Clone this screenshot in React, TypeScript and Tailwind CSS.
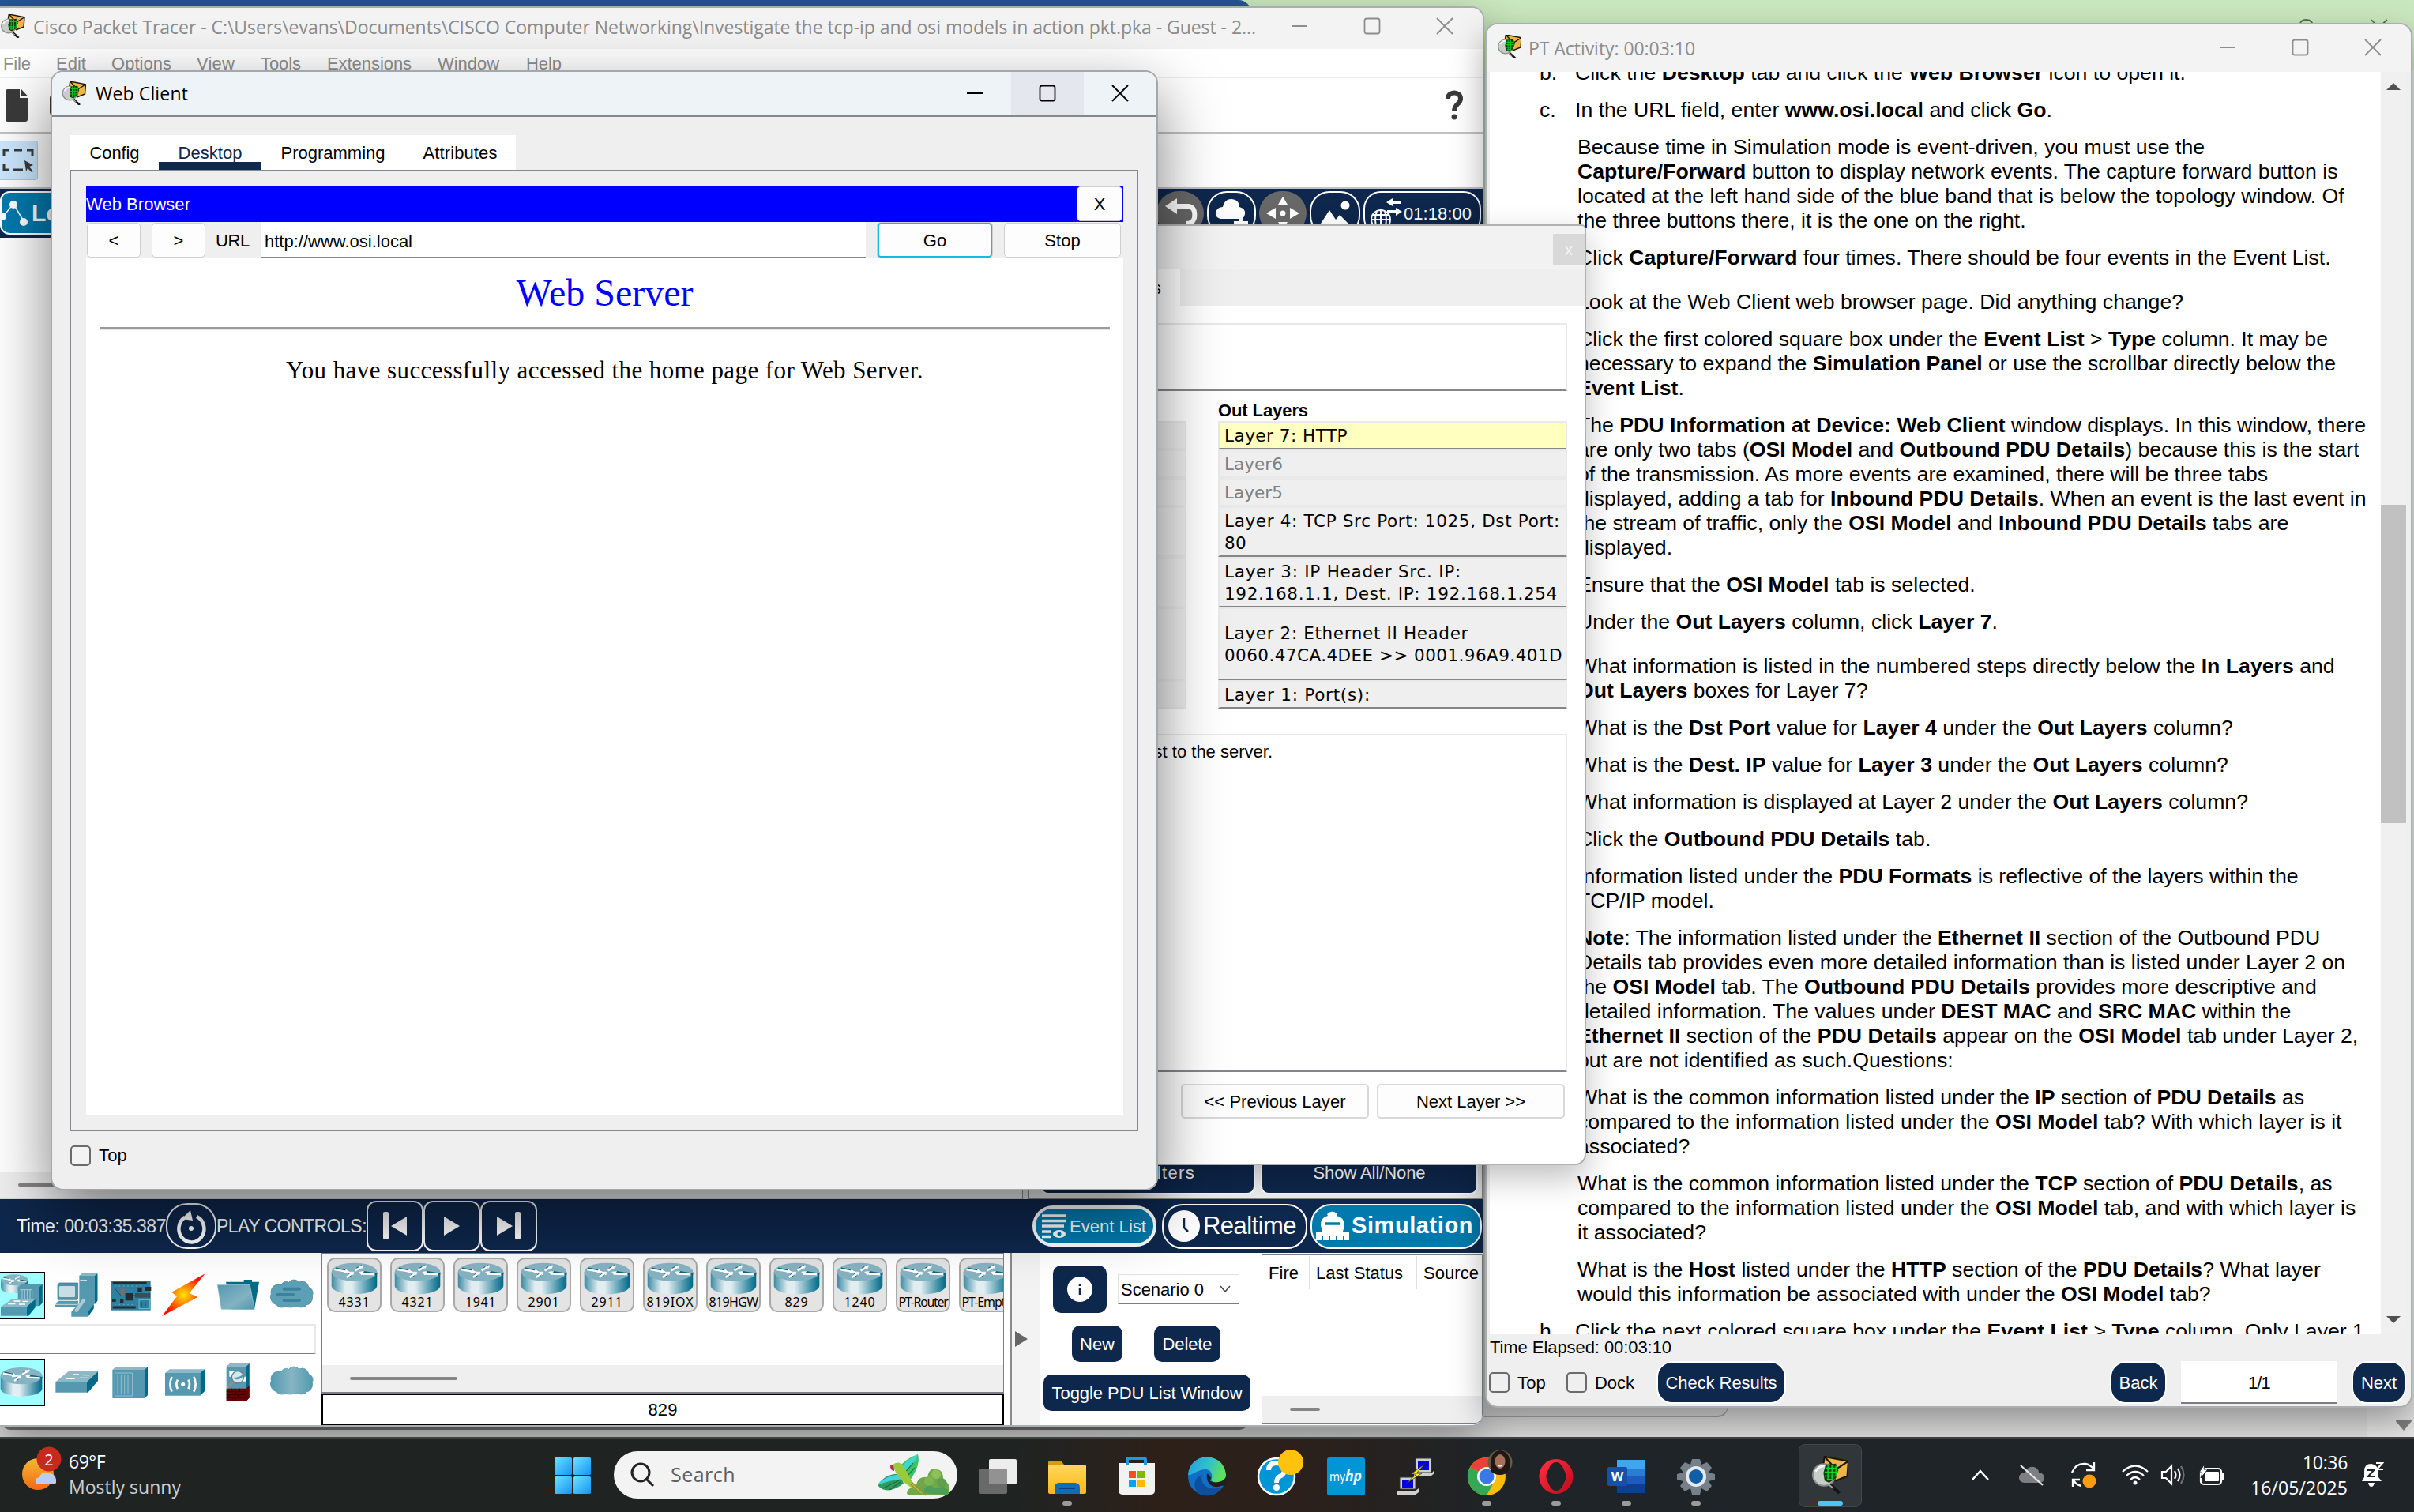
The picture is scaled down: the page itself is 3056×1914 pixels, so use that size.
import React, { useLayoutEffect, useRef, useState } from "react";

/** Single line of text, tracked so that it takes up exactly `w` pixels. */
function Fit({ w, className = "", children }: { w: number; className?: string; children: React.ReactNode }) {
  const ref = useRef<HTMLSpanElement>(null);
  const [spacing, setSpacing] = useState(0);
  useLayoutEffect(() => {
    const el = ref.current;
    if (!el) return;
    el.style.letterSpacing = "0px";
    const natural = el.getBoundingClientRect().width;
    const n = (el.textContent || "").length;
    const s = n ? (w - natural) / n : 0;
    el.style.letterSpacing = s + "px";
    setSpacing(s);
  }, [w]);
  return (
    <span ref={ref} className={"inline-block whitespace-pre " + className} style={{ letterSpacing: spacing }}>
      {children}
    </span>
  );
}

function PTIcon({ className = "" }: { className?: string }) {
  return (
    <svg className={"shrink-0 " + className} viewBox="0 0 32 32">
      <path d="M11 0 L32 4 L31 17 L21 21 L9 12Z" fill="#efb54a" stroke="#1d1503" strokeWidth="1.500" />
      <path d="M11 0 L21 11 L32 4" fill="none" stroke="#1d1503" strokeWidth="1.500" />
      <ellipse cx="10.500" cy="16" rx="9.800" ry="9.500" fill="#c9cdc9" stroke="#8b908b" strokeWidth="1.400" />
      <path d="M3 13Q6 8 11 8" stroke="#f4f6f4" strokeWidth="2" fill="none" />
      <path d="M12 7 L21 6 L23 12 L21 19 L15 23 L11 21 L10 14Z" fill="#063d09" />
      <path d="M12 10h10M11 13.500h11M11 17h10M13 20h5M14 7v14M17.500 7v14M21 8v9" stroke="#16d427" strokeWidth="1" />
      <path d="M16 24.500 L24 32" stroke="#141414" strokeWidth="2.800" />
      <path d="M14 24 L19 28" stroke="#a5a5a5" strokeWidth="1.300" />
    </svg>
  );
}

function WinButtons({ color, hover = false }: { color: string; hover?: boolean }) {
  return (
    <div className="flex h-full shrink-0">
      {["min", "max", "close"].map((k) => (
        <div key={k} className={"flex w-[92px] items-center justify-center " + (hover && k === "max" ? "bg-[#e4e8ee]" : "")}>
          <svg width="22" height="22" viewBox="0 0 22 22" fill="none" stroke={color} strokeWidth="1.8">
            {k === "min" && <path d="M1 11H21" />}
            {k === "max" && <rect x="1.5" y="1.5" width="19" height="19" rx="2.5" />}
            {k === "close" && <path d="M1 1L21 21M21 1L1 21" />}
          </svg>
        </div>
      ))}
    </div>
  );
}

function RouterShape() {
  return (
    <g>
      <path d="M2 455 V502 C2 543 160 543 160 502 V455Z" fill="url(#cyl)" />
      <ellipse cx="81" cy="455" rx="79" ry="32" fill="#86b3c2" />
      <g stroke="#1c5f73" strokeWidth="8" fill="none" transform="translate(2 -3)">
        <path d="M14 446 L58 456M158 466 L108 458M66 474 L58 466M88 446 L106 436" />
      </g>
      <g stroke="#fff" strokeWidth="7" fill="#fff">
        <path d="M12 446 L56 454M152 463 L106 461M54 474 L72 460M84 450 L104 438" fill="none" />
        <path d="M52 446 l14 10 l-20 3z M98 455 l16 -2 l-8 12z M66 455 l13 0 l-2 10z M96 434 l16 -2 l-4 10z" strokeWidth="2" />
      </g>
    </g>
  );
}

function Defs() {
  return (
    <svg width="0" height="0" className="absolute">
      <defs>
        <linearGradient id="cyl">
          <stop offset="0" stopColor="#3c8ca5" />
          <stop offset=".3" stopColor="#e2eef1" />
          <stop offset=".45" stopColor="#e2eef1" />
          <stop offset=".8" stopColor="#4c97ad" />
          <stop offset="1" stopColor="#006b88" />
        </linearGradient>
        <linearGradient id="cloudg">
          <stop offset="0" stopColor="#5399b0" />
          <stop offset=".5" stopColor="#86b5c3" />
          <stop offset="1" stopColor="#5399b0" />
        </linearGradient>
        <radialGradient id="boltg">
          <stop offset="0" stopColor="#ffe600" />
          <stop offset=".5" stopColor="#ff7a00" />
          <stop offset="1" stopColor="#ff0f00" />
        </radialGradient>
        <linearGradient id="folderg" x1="0" y1="0" x2="1" y2="1">
          <stop offset="0" stopColor="#5599b0" />
          <stop offset=".6" stopColor="#82b2c2" />
          <stop offset="1" stopColor="#4f96ad" />
        </linearGradient>
        <linearGradient id="wing" x1="0" y1="0" x2="1" y2="1">
          <stop offset="0" stopColor="#6fe0ff" />
          <stop offset="1" stopColor="#1394f5" />
        </linearGradient>
        <linearGradient id="expl" x1="0" y1="0" x2="0" y2="1">
          <stop offset="0" stopColor="#ffd75e" />
          <stop offset="1" stopColor="#fdb813" />
        </linearGradient>
        <linearGradient id="edgeg" x1="0" y1="0" x2="1" y2=".3">
          <stop offset="0" stopColor="#1f9ce0" />
          <stop offset=".6" stopColor="#35c1c9" />
          <stop offset="1" stopColor="#5fe05a" />
        </linearGradient>
        <linearGradient id="sung" x1="0" y1="0" x2="0" y2="1">
          <stop offset="0" stopColor="#f7b733" />
          <stop offset="1" stopColor="#f26a12" />
        </linearGradient>
        <linearGradient id="operag" x1="0" y1="0" x2="1" y2="1">
          <stop offset="0" stopColor="#ff2b3d" />
          <stop offset="1" stopColor="#c40d1e" />
        </linearGradient>
      </defs>
    </svg>
  );
}

const cloudPath =
  "M1050 185 C1030 180 1022 155 1030 145 C1025 118 1045 105 1068 108 C1078 95 1090 95 1097 100 C1108 86 1128 88 1135 100 C1152 90 1170 102 1172 118 C1186 122 1192 140 1186 150 C1190 165 1180 184 1166 185 C1155 198 1135 196 1125 190 C1110 197 1095 196 1088 191 C1072 198 1058 196 1050 185Z";

function DeviceCell({ i, row, children }: { i: number; row: number; children: React.ReactNode }) {
  return (
    <svg width="68" height="60" viewBox={`${189 + 204 * i} ${row} 204 180`} className="shrink-0">
      {children}
    </svg>
  );
}

function DeviceIcons() {
  return (
    <div className="flex w-[407px] shrink-0 flex-col">
      <div className="mt-[24px] flex">
        <svg width="57" height="60" viewBox="0 60 171 180" className="mr-[6px]">
          <rect x="-10" y="61.5" width="179.500" height="177" fill="#9fffff" stroke="#000" strokeWidth="3" />
          <g transform="translate(2 -205) scale(.65)">
            <RouterShape />
          </g>
          <path d="M68 118 L84 107 H161 V178 L148 190 H68Z" fill="#5499b0" />
          <path d="M150 118 L161 107 V178 L150 190Z" fill="#006b88" />
          <path d="M76 128 H122 V175 M84 128V170M94 128V170M104 128V170M114 128V170" stroke="#b5d3dc" strokeWidth="2.500" fill="none" />
          <path d="M3 193 L44 164 H134 L101 193Z" fill="#8db8c6" />
          <path d="M3 193H101V227H3Z" fill="#5499b0" />
          <path d="M101 193L134 164V195L108 227H101Z" fill="#006b88" />
          <path d="M30 182h28M72 183h24M52 171h24M85 172h22" stroke="#fff" strokeWidth="4" />
        </svg>
        <DeviceCell i={0} row={60}>
          <path d="M301 75L312 67H370V170L360 182H301Z" fill="#5499b0" />
          <path d="M301 75L312 67H370L362 75Z" fill="#8db8c6" />
          <path d="M360 75L370 67V170L360 182Z" fill="#006b88" />
          <path d="M304 90h26v6h-26z" fill="#c8dde4" />
          <path d="M219 108L226 102H296V160L290 166H219Z" fill="#4e95ac" stroke="#2c768e" strokeWidth="2" />
          <rect x="225" y="114" width="60" height="42" rx="4" fill="#c8dde4" />
          <path d="M214 178L222 170H298L294 192H208Z" fill="#5499b0" />
          <path d="M210 184H292" stroke="#c8dde4" strokeWidth="3" />
          <path d="M271 212L300 180H356V196L334 230H271Z" fill="#5499b0" />
          <path d="M334 212L356 184V200L334 230Z" fill="#006b88" />
          <path d="M290 206L318 168" stroke="#a9ccd7" strokeWidth="13" strokeLinecap="round" />
        </DeviceCell>
        <DeviceCell i={1} row={60}>
          <rect x="421" y="96" width="151" height="110" fill="#2f7f9e" />
          <path d="M428 103H557M428 195H515" stroke="#222c31" strokeWidth="9" />
          <path d="M476 141h28v28h-28zM523 119h16v16h-16zM550 117h24v15h-24zM456 165h13v13h-13zM426 164h14v10h-14z" fill="#222c31" />
          <path d="M513 141h58v17h-58z" fill="#3b4d55" />
          <path d="M458 120h15v30h-15z" fill="#7d6c66" />
          <rect x="528" y="166" width="40" height="34" fill="none" stroke="#5fc0de" strokeWidth="3" />
          <path d="M436 114h120M436 184h80" stroke="#6cb2ca" strokeWidth="3" strokeDasharray="4 12" />
          <path d="M435 122l26 30M504 150h12M538 176v14M552 176v14" stroke="#15485c" strokeWidth="2.500" />
        </DeviceCell>
        <DeviceCell i={2} row={60}>
          <path d="M779 67L652 137L672 153L615 228L751 156L719 141Z" fill="url(#boltg)" />
        </DeviceCell>
        <DeviceCell i={3} row={60}>
          <path d="M858 98H926V90H957V98H984L966 203H880Z" fill="#006b88" />
          <path d="M825 109H949L967 203H840Z" fill="url(#folderg)" stroke="#d3e5ea" strokeWidth="1.500" />
        </DeviceCell>
        <DeviceCell i={4} row={60}>
          <path d={cloudPath} fill="#5d9fb4" stroke="#3f8399" strokeWidth="2" />
          <path d="M1079 125h58M1053 147h60M1079 168h58" stroke="#3b839b" strokeWidth="12" strokeLinecap="round" />
        </DeviceCell>
      </div>
      <div className="mt-[6px] h-[38px] w-[400px] border-t-2 border-r-2 border-b border-[#e8e8e8] border-b-[#7c7c84] bg-white" />
      <div className="mt-[6px] flex">
        <svg width="57" height="60" viewBox="0 390 171 180" className="mr-[6px]">
          <rect x="-10" y="391.5" width="179.500" height="177" fill="#9fffff" stroke="#000" strokeWidth="3" />
          <RouterShape />
        </svg>
        <DeviceCell i={0} row={390}>
          <path d="M211 478L260 438H372L330 478Z" fill="#8db8c6" />
          <path d="M211 478H330V518H211Z" fill="#5499b0" />
          <path d="M330 478L372 438V474L334 518H330Z" fill="#006b88" />
          <path d="M250 466h34M302 463h30M276 450h24M316 452h24" stroke="#fff" strokeWidth="4" />
        </DeviceCell>
        <DeviceCell i={1} row={390}>
          <path d="M427 432L440 420H561L549 432Z" fill="#8db8c6" />
          <path d="M427 432H549V540H427Z" fill="#5499b0" />
          <path d="M549 432L561 420V528L549 540Z" fill="#006b88" />
          <path d="M436 444H503V531H436ZM447 452V522M460 452V522M473 452V522M486 452V522" fill="none" stroke="#a5cad6" strokeWidth="2.500" />
        </DeviceCell>
        <DeviceCell i={2} row={390}>
          <path d="M627 444L644 430H777L760 444Z" fill="#8db8c6" />
          <path d="M627 444H760V530H627Z" fill="#5499b0" />
          <path d="M760 444L777 430V514L760 530Z" fill="#006b88" />
          <circle cx="695" cy="487" r="7.500" fill="#fff" />
          <path d="M675 470q-10 17 0 34M715 470q10 17 0 34M653 459q-14 28 0 56M736 459q14 28 0 56" stroke="#fff" strokeWidth="8" fill="none" />
        </DeviceCell>
        <DeviceCell i={3} row={390}>
          <path d="M860 420L874 408H947V538L935 551H860Z" fill="#5499b0" />
          <path d="M860 420L874 408H947L935 420Z" fill="#8db8c6" />
          <path d="M935 420L947 408V538L935 551Z" fill="#006b88" />
          <path d="M860 503H935L947 491V538L935 551H860Z" fill="#6b0000" />
          <path d="M860 515H935M860 527H935M860 539H935M880 503v12M910 503v12M895 515v12M870 527v12M905 527v12M885 539v12" stroke="#2a0000" strokeWidth="2.500" />
          <path d="M871 436h30v22h-30zM905 458h28v18h-28z" fill="#fff" />
          <circle cx="903" cy="460" r="23" fill="#d7e6ea" stroke="#6c7c80" strokeWidth="4" />
          <path d="M885 462q12 14 34 0q4-6 2-12q-12 12-36 12" fill="#5499b0" />
          <path d="M887 477L863 501" stroke="#a58b80" strokeWidth="6" />
        </DeviceCell>
        <DeviceCell i={4} row={390}>
          <path d={cloudPath} fill="url(#cloudg)" stroke="#4d8fa4" strokeWidth="2" transform="translate(0 330)" />
        </DeviceCell>
      </div>
    </div>
  );
}

const routers: [string, number][] = [
  ["4331", 40], ["4321", 40], ["1941", 39], ["2901", 40], ["2911", 40], ["819IOX", 60],
  ["819HGW", 62], ["829", 30], ["1240", 40], ["PT-Router", 62], ["PT-Empty", 62],
];

function Btn({ className = "", children }: { className?: string; children: React.ReactNode }) {
  return <div className={"flex items-center justify-center rounded-[10px] bg-[#0e274c] text-white " + className}>{children}</div>;
}

function MainWindow() {
  return (
    <div className="absolute top-[8px] left-0 flex h-[1798px] w-[1879px] flex-col overflow-hidden rounded-tr-[16px] rounded-br-[16px] border-t-2 border-r-2 border-b-2 border-[#a9aeb0] bg-white text-[22px] shadow-[0_20px_50px_rgba(0,0,0,0.4)]">
      <div className="flex h-[52px] shrink-0 items-center bg-[#f3f3f3] pb-[3px]">
        <PTIcon className="mt-[-3px] h-[30px] w-[32px]" />
        <Fit w={1548} className="ml-[10px] font-['Open_Sans',sans-serif] text-[23px] text-[#8c8c8c]">
          {"Cisco Packet Tracer - C:\\Users\\evans\\Documents\\CISCO Computer Networking\\Investigate the tcp-ip and osi models in action pkt.pka - Guest - 2..."}
        </Fit>
        <div className="ml-[9px] h-[46px] self-start">
          <WinButtons color="#8d8d8d" />
        </div>
      </div>
      <div className="flex h-[37px] shrink-0 items-center border-b border-[#ececec] pl-[4px] text-[#8f8f8f]">
        <Fit w={35} className="mr-[32px]">File</Fit>
        <Fit w={38} className="mr-[32px]">Edit</Fit>
        <Fit w={76} className="mr-[32px]">Options</Fit>
        <Fit w={48} className="mr-[33px]">View</Fit>
        <Fit w={51} className="mr-[33px]">Tools</Fit>
        <Fit w={107} className="mr-[33px]">Extensions</Fit>
        <Fit w={78} className="mr-[34px]">Window</Fit>
        <Fit w={45}>Help</Fit>
      </div>
      <div className="flex h-[70px] shrink-0 items-center justify-between border-b-2 border-[#c2c2c2] pr-[24px] pl-[7px]">
        <div className="flex items-center">
          <svg width="28" height="41" viewBox="0 0 28 41">
            <path d="M3 0H18V11H28V38Q28 41 25 41H3Q0 41 0 38V3Q0 0 3 0ZM20 0L28 8.500H20Z" fill="#3a3a3a" />
          </svg>
          <div className="ml-[28px] h-[30px] w-[20px] rounded-md bg-[#3a3a3a]" />
        </div>
        <svg width="24" height="38" viewBox="0 0 24 38" fill="none" stroke="#3a3a3a">
          <path d="M4 11 C4 1 20 1 20 11 C20 18 12 17 12 27" strokeWidth="6" />
          <circle cx="12" cy="34" r="3.500" fill="#3a3a3a" stroke="none" />
        </svg>
      </div>
      <div className="flex h-[70px] shrink-0 items-center border-b-2 border-[#c2c2c2]">
        <div className="flex h-[50px] w-[48px] items-center rounded-r-[4px] border border-l-0 border-[#99d1ff] bg-[#cce8ff] pl-[3px]">
          <svg width="40" height="30" viewBox="0 0 40 30" fill="none" stroke="#3a3a3a" strokeWidth="3">
            <path d="M2 9V2H9M15 2H25M31 2H38V9M2 19V27H9M13 27H26" />
            <path d="M28 15L39 21L34 23L39 29L37 30L32 25L30 29Z" fill="#3a3a3a" stroke="none" />
          </svg>
        </div>
      </div>
      <div className="flex h-[62px] shrink-0 items-start justify-between bg-[#0e274c] pt-[3px] pr-[2px]">
        <div className="flex h-[55px] w-[170px] items-center rounded-r-[16px] rounded-l-[12px] border-2 border-white bg-[#007aad]">
          <svg width="34" height="36" viewBox="0 0 34 36">
            <path d="M2 22L15 6L28 28" stroke="#fff" strokeWidth="1.500" fill="none" />
            <circle cx="15" cy="7" r="5" fill="#fff" />
            <circle cx="1" cy="22" r="5" fill="#fff" />
            <circle cx="28" cy="29" r="5" fill="#fff" />
          </svg>
          <span className="ml-[4px] text-[30px] font-bold text-white">Logical</span>
        </div>
        <div className="flex h-[56px] items-center gap-[4px]">
          <svg width="60" height="56" viewBox="0 0 60 56">
            <rect width="60" height="56" rx="28" fill="#686868" />
            <path d="M20 19H40Q50 20 48 34Q46 41 38 41" stroke="#fff" strokeWidth="6" fill="none" />
            <path d="M11 19L26 9V29Z" fill="#fff" />
          </svg>
          <svg width="62" height="56" viewBox="0 0 62 56">
            <rect x="1" y="1" width="60" height="54" rx="24" fill="#0e274c" stroke="#fff" strokeWidth="2" />
            <path d="M17 35Q10 33 11 27Q13 20 20 20Q22 10 31 10Q41 11 41 20Q49 22 48 29Q47 35 42 35Z" fill="#fff" />
            <path d="M34 40H52M43 33V50" stroke="#fff" strokeWidth="4" />
          </svg>
          <svg width="60" height="56" viewBox="0 0 60 56">
            <rect width="60" height="56" rx="28" fill="#686868" />
            <path d="M30 7L36 17H24ZM30 49L36 39H24ZM9 28L21 21V35ZM51 28L39 21V35Z" fill="#fff" />
            <circle cx="30" cy="28" r="3.500" fill="#fff" />
          </svg>
          <svg width="64" height="56" viewBox="0 0 64 56">
            <rect x="1" y="1" width="62" height="54" rx="24" fill="#0e274c" stroke="#fff" strokeWidth="2" />
            <path d="M12 44L25 24L33 36L38 30L52 44Z" fill="#fff" />
            <circle cx="45" cy="18" r="5.500" fill="#fff" />
          </svg>
          <div className="flex h-[56px] w-[149px] items-center rounded-[22px] border-2 border-white pl-[6px]">
            <svg width="42" height="50" viewBox="0 0 42 50" fill="none" stroke="#fff" strokeWidth="2">
              <circle cx="14" cy="33" r="12" />
              <path d="M14 21V45M2 33H26M4 27H24M4 39H24M9 23Q5 33 9 43M19 23Q23 33 19 43" />
              <path d="M26 11H40M22 23H36" strokeWidth="4" />
              <path d="M21 11l8-5v10zM41 23l-8-5v10z" fill="#fff" stroke="none" />
            </svg>
            <Fit w={86} className="ml-[1px] text-white">01:18:00</Fit>
          </div>
        </div>
      </div>
      <div className="flex h-[1217px] shrink-0">
        <div className="flex w-[1294px] flex-col">
          <div className="flex-1 bg-white" />
          <div className="flex h-[34px] items-center border-b-2 border-[#d9d9d9] bg-[#efefef] pl-[23px]">
            <div className="h-[4px] w-[600px] rounded bg-[#858585]" />
          </div>
        </div>
        <div className="w-[9px] border-x border-[#8a8a8a] bg-[#e6e6e6]" />
        <div className="flex flex-1 flex-col justify-end border-r border-b-2 border-[#8a8a8a] bg-[#efefef] pb-[4px] pl-[14px]">
          <div className="flex gap-[7px]">
            <Btn className="h-[56px] w-[272px] border-2 border-white">
              <Fit w={120}>Edit Filters</Fit>
            </Btn>
            <Btn className="h-[56px] w-[275px] border-2 border-white">
              <Fit w={142}>Show All/None</Fit>
            </Btn>
          </div>
        </div>
      </div>
      <div className="flex h-[68px] shrink-0 items-center bg-[#0e274c] pl-[21px] text-[23px] text-white">
        <Fit w={189}>Time: 00:03:35.387</Fit>
        <svg width="64" height="58" viewBox="0 0 64 58" fill="none" stroke="#fff">
          <rect x="1" y="1" width="62" height="56" rx="26" strokeWidth="2" />
          <path d="M23 17A16 17 0 1 0 38 16" strokeWidth="4.500" transform="translate(1 1)" />
          <path d="M31 9L20 20L34 22Z" fill="#fff" stroke="none" />
          <circle cx="32" cy="32" r="3" fill="#fff" stroke="none" />
        </svg>
        <Fit w={190}>PLAY CONTROLS:</Fit>
        <div className="flex">
          <div className="flex h-[64px] w-[72px] items-center justify-center rounded-[12px] border-2 border-white">
            <svg width="32" height="36" viewBox="0 0 32 36" fill="#fff"><rect x="1" width="7" height="35" rx="2" /><path d="M31 6V30L11 18Z" /></svg>
          </div>
          <div className="flex h-[64px] w-[72px] items-center justify-center rounded-[12px] border-2 border-white">
            <svg width="22" height="26" viewBox="0 0 22 26" fill="#fff"><path d="M1 1L21 13L1 25Z" /></svg>
          </div>
          <div className="flex h-[64px] w-[72px] items-center justify-center rounded-[12px] border-2 border-white">
            <svg width="32" height="36" viewBox="0 0 32 36" fill="#fff"><path d="M1 6V30L21 18Z" /><rect x="24" width="7" height="35" rx="2" /></svg>
          </div>
        </div>
        <div className="ml-auto flex items-center pr-[1px]">
          <div className="flex h-[52px] w-[157px] items-center rounded-[26px] border-[4px] border-white bg-[#007aad] pl-[8px]">
            <svg width="32" height="32" viewBox="0 0 32 32" stroke="#fff" strokeWidth="3.400">
              <path d="M0 3H30M0 9.500H30M0 16H28M0 23H12M0 29.500H12" />
              <ellipse cx="22" cy="26" rx="8" ry="5" fill="#fff" stroke="none" />
              <circle cx="22" cy="26" r="1.500" stroke="#007aad" strokeWidth="2" />
            </svg>
            <Fit w={97} className="ml-[3px] text-[22px]">Event List</Fit>
          </div>
          <div className="ml-[7px] flex h-[57px] w-[184px] items-center rounded-[26px] border-2 border-white pl-[6px]">
            <svg width="40" height="40" viewBox="0 0 40 40"><circle cx="20" cy="20" r="20" fill="#fff" /><path d="M20 10V22L25 27" stroke="#0e274c" strokeWidth="2.500" fill="none" /></svg>
            <Fit w={118} className="ml-[4px] text-[31px]">Realtime</Fit>
          </div>
          <div className="ml-[4px] flex h-[57px] w-[217px] items-center rounded-[26px] border-2 border-white bg-[#007aad] pl-[5px]">
            <svg width="42" height="38" viewBox="0 0 42 38" fill="#fff">
              <path d="M14 4Q21 -3 27 4L26 6Q36 8 36 18L34 26H8L6 18Q6 8 15 6Z" />
              <path d="M11 16H31" stroke="#007aad" strokeWidth="3.500" />
              <path d="M0 26H42V37H0Z" />
              <path d="M8 31V37M17 31V37M26 31V37M35 31V37" stroke="#007aad" strokeWidth="2" />
            </svg>
            <Fit w={154} className="ml-[3px] text-[29px] font-bold">Simulation</Fit>
          </div>
        </div>
      </div>
      <div className="flex h-[218px] shrink-0">
        <DeviceIcons />
        <div className="flex w-[864px] shrink-0 flex-col">
          <div className="flex h-[178px] flex-col border border-b-2 border-[#7e7e88]">
            <div className="flex h-[141px] gap-[11px] overflow-hidden pt-[5px] pl-[6px]">
              {routers.map(([name, w]) => (
                <div key={name} className="flex h-[69px] w-[69px] shrink-0 flex-col items-center rounded-[10px] border-2 border-[#a9a9a9] bg-[#e4e4e4] pt-[4px]">
                  <svg width="59" height="41" viewBox="0 421 162 114" preserveAspectRatio="none" className="shrink-0"><RouterShape /></svg>
                  <Fit w={w} className="mt-[-1px] font-['Noto_Sans',sans-serif] text-[16px] leading-[20px] text-black">{name}</Fit>
                </div>
              ))}
            </div>
            <div className="flex flex-1 items-center bg-[#efefef] pl-[35px]">
              <div className="h-[4px] w-[136px] rounded bg-[#858585]" />
            </div>
          </div>
          <div className="flex flex-1 items-center justify-center border-2 border-black text-black">
            <Fit w={37}>829</Fit>
          </div>
        </div>
        <div className="ml-[8px] flex w-[38px] items-center border-l-2 border-[#8a8a8a] bg-[#f3f3f3] pl-[4px]">
          <svg width="17" height="20" viewBox="0 0 17 20" fill="#666"><path d="M0 0L16 10L0 20Z" /></svg>
        </div>
        <div className="flex w-[280px] flex-col items-center pt-[16px]">
          <div className="flex w-full items-center pl-[16px]">
            <div className="flex h-[60px] w-[68px] items-center justify-center rounded-[10px] bg-[#0e274c]">
              <svg width="32" height="32" viewBox="0 0 32 32"><circle cx="16" cy="16" r="16" fill="#fff" /><path d="M16 14V23M16 9V12" stroke="#0e274c" strokeWidth="2.500" /></svg>
            </div>
            <div className="ml-[14px] flex h-[38px] w-[154px] items-center justify-between border border-[#e3e3e3] border-b-[#7c7c84] pr-[10px] pl-[3px] text-black">
              <Fit w={105} className="mt-[1px]">Scenario 0</Fit>
              <svg width="14" height="10" viewBox="0 0 14 10" fill="none" stroke="#444" strokeWidth="1.500"><path d="M1 1L7 8L13 1" /></svg>
            </div>
          </div>
          <div className="mt-[16px] flex w-full pl-[40px]">
            <Btn className="h-[46px] w-[64px]"><Fit w={44}>New</Fit></Btn>
            <Btn className="ml-[40px] h-[46px] w-[84px]"><Fit w={63}>Delete</Fit></Btn>
          </div>
          <div className="mt-[16px] flex w-full pl-[4px]">
            <Btn className="h-[46px] w-[262px]"><Fit w={241}>Toggle PDU List Window</Fit></Btn>
          </div>
        </div>
        <div className="mt-[2px] mb-[2px] flex flex-1 flex-col justify-between overflow-hidden rounded-br-[10px] border border-[#7e7e88] text-black">
          <div className="flex h-[44px] items-center whitespace-nowrap">
            <Fit w={38} className="ml-[8px]">Fire</Fit>
            <div className="ml-[13px] h-[42px] w-px bg-[#e0e0e0]" />
            <Fit w={110} className="ml-[8px]">Last Status</Fit>
            <div className="ml-[17px] h-[42px] w-px bg-[#e0e0e0]" />
            <Fit w={70} className="ml-[8px]">Source</Fit>
          </div>
          <div className="flex h-[34px] items-center bg-[#efefef] pl-[35px]">
            <div className="h-[4px] w-[38px] rounded bg-[#858585]" />
          </div>
        </div>
      </div>
    </div>
  );
}

function L({ children }: { children: React.ReactNode }) {
  return <div className="h-[31px] whitespace-nowrap">{children}</div>;
}

function ActivityWindow() {
  return (
    <div className="absolute top-[29px] left-[1880px] flex h-[1753px] w-[1174px] flex-col overflow-hidden rounded-[16px] border-2 border-[#a9aeaf] bg-[#efefef] shadow-[0_18px_44px_rgba(0,0,0,0.35)]">
      <div className="flex h-[60px] shrink-0 items-center justify-between bg-[#f3f3f3] pl-[14px]">
        <div className="flex items-center">
          <PTIcon className="mt-[-4px] h-[30px] w-[30px]" />
          <Fit w={211} className="ml-[9px] font-['Open_Sans',sans-serif] text-[23px] text-[#8c8c8c]">PT Activity: 00:03:10</Fit>
        </div>
        <div className="mr-[2px] h-[57px] self-start"><WinButtons color="#8d8d8d" /></div>
      </div>
      <div className="flex h-[1598px] shrink-0 pl-[4px]">
        <div className="w-[1128px] overflow-hidden bg-white text-[26.670px] leading-[31px] text-black">
          <div className="mt-[-14px] flex flex-col gap-[16px] pl-[111px]">
            <div className="ml-[-48px] flex whitespace-nowrap"><span className="w-[45px]">b.</span><span>Click the <b>Desktop</b> tab and click the <b>Web Browser</b> icon to open it.</span></div>
            <div className="ml-[-48px] flex whitespace-nowrap"><span className="w-[45px]">c.</span><span>In the URL field, enter <b>www.osi.local</b> and click <b>Go</b>.</span></div>
            <div>
              <L>Because time in Simulation mode is event-driven, you must use the</L>
              <L><b>Capture/Forward</b> button to display network events. The capture forward button is</L>
              <L>located at the left hand side of the blue band that is below the topology window. Of</L>
              <L>the three buttons there, it is the one on the right.</L>
            </div>
            <L>Click <b>Capture/Forward</b> four times. There should be four events in the Event List.</L>
            <div className="mt-[9px]"><L>Look at the Web Client web browser page. Did anything change?</L></div>
            <div>
              <L>Click the first colored square box under the <b>Event List</b> &gt; <b>Type</b> column. It may be</L>
              <L>necessary to expand the <b>Simulation Panel</b> or use the scrollbar directly below the</L>
              <L><b>Event List</b>.</L>
            </div>
            <div>
              <L>The <b>PDU Information at Device: Web Client</b> window displays. In this window, there</L>
              <L>are only two tabs (<b>OSI Model</b> and <b>Outbound PDU Details</b>) because this is the start</L>
              <L>of the transmission. As more events are examined, there will be three tabs</L>
              <L>displayed, adding a tab for <b>Inbound PDU Details</b>. When an event is the last event in</L>
              <L>the stream of traffic, only the <b>OSI Model</b> and <b>Inbound PDU Details</b> tabs are</L>
              <L>displayed.</L>
            </div>
            <L>Ensure that the <b>OSI Model</b> tab is selected.</L>
            <L>Under the <b>Out Layers</b> column, click <b>Layer 7</b>.</L>
            <div className="mt-[9px]">
              <L>What information is listed in the numbered steps directly below the <b>In Layers</b> and</L>
              <L><b>Out Layers</b> boxes for Layer 7?</L>
            </div>
            <L>What is the <b>Dst Port</b> value for <b>Layer 4</b> under the <b>Out Layers</b> column?</L>
            <L>What is the <b>Dest. IP</b> value for <b>Layer 3</b> under the <b>Out Layers</b> column?</L>
            <L>What information is displayed at Layer 2 under the <b>Out Layers</b> column?</L>
            <L>Click the <b>Outbound PDU Details</b> tab.</L>
            <div>
              <L>Information listed under the <b>PDU Formats</b> is reflective of the layers within the</L>
              <L>TCP/IP model.</L>
            </div>
            <div>
              <L><b>Note</b>: The information listed under the <b>Ethernet II</b> section of the Outbound PDU</L>
              <L>Details tab provides even more detailed information than is listed under Layer 2 on</L>
              <L>the <b>OSI Model</b> tab. The <b>Outbound PDU Details</b> provides more descriptive and</L>
              <L>detailed information. The values under <b>DEST MAC</b> and <b>SRC MAC</b> within the</L>
              <L><b>Ethernet II</b> section of the <b>PDU Details</b> appear on the <b>OSI Model</b> tab under Layer 2,</L>
              <L>but are not identified as such.Questions:</L>
            </div>
            <div>
              <L>What is the common information listed under the <b>IP</b> section of <b>PDU Details</b> as</L>
              <L>compared to the information listed under the <b>OSI Model</b> tab? With which layer is it</L>
              <L>associated?</L>
            </div>
            <div>
              <L>What is the common information listed under the <b>TCP</b> section of <b>PDU Details</b>, as</L>
              <L>compared to the information listed under the <b>OSI Model</b> tab, and with which layer is</L>
              <L>it associated?</L>
            </div>
            <div>
              <L>What is the <b>Host</b> listed under the <b>HTTP</b> section of the <b>PDU Details</b>? What layer</L>
              <L>would this information be associated with under the <b>OSI Model</b> tab?</L>
            </div>
            <div className="ml-[-48px] flex whitespace-nowrap"><span className="w-[45px]">h.</span><span>Click the next colored square box under the <b>Event List</b> &gt; <b>Type</b> column. Only Layer 1</span></div>
          </div>
        </div>
        <div className="flex w-[32px] flex-col items-center bg-[#f0f0f0] pt-[14px]">
          <svg width="18" height="9" viewBox="0 0 18 9" fill="#505050" className="shrink-0"><path d="M9 0L18 9H0Z" /></svg>
          <div className="mt-[525px] h-[403px] w-[32px] shrink-0 bg-[#c1c1c1]" />
          <svg width="18" height="9" viewBox="0 0 18 9" fill="#505050" className="mt-auto mb-[14px] shrink-0"><path d="M9 9L18 0H0Z" /></svg>
        </div>
      </div>
      <div className="flex flex-1 flex-col pl-[4px] text-[22px] text-black">
        <div className="mt-[4px] h-[26px] leading-[26px]"><Fit w={230}>Time Elapsed: 00:03:10</Fit></div>
        <div className="mt-[4px] flex items-center">
          <div className="ml-[-1px] h-[26px] w-[26px] rounded-[5px] border-2 border-[#6b6b6b]" />
          <Fit w={36} className="ml-[10px]">Top</Fit>
          <div className="ml-[26px] h-[26px] w-[26px] rounded-[5px] border-2 border-[#6b6b6b]" />
          <Fit w={50} className="ml-[10px]">Dock</Fit>
          <div className="ml-[28px] flex h-[54px] w-[164px] items-center justify-center rounded-[20px] border-2 border-white bg-[#0e274c] text-white"><Fit w={141}>Check Results</Fit></div>
          <div className="ml-[410px] flex h-[54px] w-[72px] items-center justify-center rounded-[20px] border-2 border-white bg-[#0e274c] text-white"><Fit w={49}>Back</Fit></div>
          <div className="ml-[18px] flex h-[54px] w-[198px] items-center justify-center border-b-2 border-[#7c7c84] bg-white pt-[3px]"><Fit w={28}>1/1</Fit></div>
          <div className="ml-[18px] flex h-[54px] w-[69px] items-center justify-center rounded-[20px] border-2 border-white bg-[#0e274c] text-white"><Fit w={45}>Next</Fit></div>
        </div>
      </div>
    </div>
  );
}

function Layer({ h, yellow, dim, live = true, lines }: { h: number; yellow?: boolean; dim?: boolean; live?: boolean; lines: [string, number][] }) {
  return (
    <div
      className={
        "flex flex-col justify-center border-2 border-[#e9e9e9] pt-[2px] pl-[6px] " +
        (live ? "border-b-[#85858a] " : "") + (yellow ? "bg-[#ffffc0] " : "bg-[#efefef] ") + (dim ? "text-[#808080]" : "text-black")
      }
      style={{ height: h }}
    >
      {lines.map(([t, w]) => (
        <div key={t} className="h-[28px] leading-[28px]"><Fit w={w}>{t}</Fit></div>
      ))}
    </div>
  );
}

function PduWindow() {
  return (
    <div className="absolute top-[284px] left-[1398px] flex h-[1191px] w-[610px] flex-col overflow-hidden rounded-[14px] rounded-tr-[6px] border-2 border-[#b0b0b0] bg-white text-[22px] text-black shadow-[0_16px_40px_rgba(0,0,0,0.25)]">
      <div className="flex h-[55px] shrink-0 items-center justify-end bg-[#f2f2f2]">
        <div className="mt-[5px] flex h-[40px] w-[40px] items-center justify-center bg-[#d9d9d9] text-[20px] text-[#f4f4f4]">x</div>
      </div>
      <div className="flex h-[46px] shrink-0">
        <div className="flex w-[94px] items-center justify-end bg-white pr-[24px]">Details</div>
        <div className="flex-1 bg-[#efefef]" />
      </div>
      <div className="mt-[22px] mr-[22px] h-[86px] shrink-0 border-t-2 border-r-2 border-b-2 border-[#e9e9e9] border-b-[#85858a]" />
      <div className="flex h-[38px] shrink-0 items-center pt-[10px] pl-[142px]"><Fit w={114} className="font-bold">Out Layers</Fit></div>
      <div className="flex h-[364px] shrink-0 justify-between pr-[22px]">
        <div className="flex w-[102px] flex-col">
          {[36, 36, 36, 64, 64, 92, 36].map((h, i) => <Layer key={i} h={h} live={false} lines={[]} />)}
        </div>
        <div className="flex w-[442px] flex-col font-['DejaVu_Sans',Verdana,sans-serif] text-[21.500px]">
          <Layer h={36} yellow lines={[["Layer 7: HTTP", 156]]} />
          <Layer h={36} dim live={false} lines={[["Layer6", 74]]} />
          <Layer h={36} dim live={false} lines={[["Layer5", 74]]} />
          <Layer h={64} lines={[["Layer 4: TCP Src Port: 1025, Dst Port:", 425], ["80", 28]]} />
          <Layer h={64} lines={[["Layer 3: IP Header Src. IP:", 300], ["192.168.1.1, Dest. IP: 192.168.1.254", 422]]} />
          <Layer h={92} lines={[["Layer 2: Ethernet II Header", 309], ["0060.47CA.4DEE >> 0001.96A9.401D", 428]]} />
          <Layer h={36} lines={[["Layer 1: Port(s):", 185]]} />
        </div>
      </div>
      <div className="mt-[32px] mr-[22px] flex h-[428px] shrink-0 justify-end border-t-2 border-r-2 border-b-2 border-[#e9e9e9] border-b-[#85858a] pt-[4px] pr-[371px] whitespace-nowrap">
        1. The HTTP client sends a HTTP request to the server.
      </div>
      <div className="mt-[15px] flex shrink-0 justify-end gap-[10px] pr-[25px]">
        <div className="flex h-[44px] w-[238px] items-center justify-center rounded-[5px] border-2 border-[#d8d8d8] bg-[#fdfdfd]"><Fit w={179}>{"<< Previous Layer"}</Fit></div>
        <div className="flex h-[44px] w-[238px] items-center justify-center rounded-[5px] border-2 border-[#d8d8d8] bg-[#fdfdfd]"><Fit w={138}>{"Next Layer >>"}</Fit></div>
      </div>
    </div>
  );
}

function WebClientWindow() {
  const box = "flex h-[44px] items-center justify-center rounded-[5px] border border-[#cfcfcf] bg-[#fdfdfd] ";
  return (
    <div className="absolute top-[89px] left-[64px] flex h-[1418px] w-[1402px] flex-col overflow-hidden rounded-[16px] border-2 border-[#a4a8aa] bg-[#efefef] text-[22px] text-black shadow-[0_30px_80px_rgba(0,0,0,0.5)]">
      <div className="flex h-[57px] shrink-0 items-center justify-between border-b-2 border-[#85868e] bg-[#eef3f8] pl-[12px]">
        <div className="flex items-center">
          <PTIcon className="mt-[-2px] h-[30px] w-[31px]" />
          <Fit w={117} className="ml-[12px] font-['Open_Sans',sans-serif] text-[23px]">Web Client</Fit>
        </div>
        <div className="h-[54px] self-start"><WinButtons color="#000000" hover /></div>
      </div>
      <div className="mt-[23px] ml-[23px] flex h-[44px] w-[564px] shrink-0 bg-white">
        <div className="flex w-[112px] items-center justify-center"><Fit w={63}>Config</Fit></div>
        <div className="flex w-[130px] items-center justify-center border-b-[10px] border-[#0f284d] text-[#0f284d]"><Fit w={81} className="mt-[10px]">Desktop</Fit></div>
        <div className="flex w-[181px] items-center justify-center"><Fit w={132}>Programming</Fit></div>
        <div className="flex flex-1 items-center justify-center"><Fit w={94}>Attributes</Fit></div>
      </div>
      <div className="mr-[23px] ml-[23px] flex h-[1217px] shrink-0 flex-col border-[1.500px] border-[#85868e] pt-[19px] pr-[18px] pl-[19px]">
        <div className="flex h-[46px] shrink-0 items-center justify-between bg-[#0000ff] pr-px text-white">
          <Fit w={132}>Web Browser</Fit>
          <div className={box + "w-[58px] text-black"}>X</div>
        </div>
        <div className="flex h-[46px] shrink-0 items-center">
          <div className={box + "ml-px w-[68px]"}>&lt;</div>
          <div className={box + "ml-[14px] w-[68px]"}>&gt;</div>
          <Fit w={43} className="ml-[13px]">URL</Fit>
          <div className="ml-[14px] flex h-[46px] w-[766px] items-center border-b-2 border-[#85858a] bg-white pt-[4px] pl-[5px]"><Fit w={187}>http://www.osi.local</Fit></div>
          <div className="ml-[15px] flex h-[44px] w-[145px] items-center justify-center rounded-[4px] border-[2.500px] border-[#12bbe2] bg-[#fdfdfd] outline outline-1 outline-[#d0d0d0]">Go</div>
          <div className={box + "ml-[15px] w-[148px]"}>Stop</div>
        </div>
        <div className="flex h-[1084px] shrink-0 flex-col items-center bg-white font-['Liberation_Serif',serif]">
          <div className="mt-[14px] h-[60px] text-[48px] leading-[60px] text-[#0000ff]"><Fit w={224}>Web Server</Fit></div>
          <div className="mt-[13px] h-[4px] w-[1279px] border-t-2 border-b border-[#9a9a9a] border-b-[#e8e8e8]" />
          <div className="mt-[31px] h-[40px] text-[31px] leading-[40px]"><Fit w={807}>You have successfully accessed the home page for Web Server.</Fit></div>
        </div>
      </div>
      <div className="mt-[14px] ml-[23px] flex items-center">
        <div className="h-[26px] w-[26px] rounded-[5px] border-2 border-[#6b6b6b] bg-[#f3f3f3]" />
        <Fit w={36} className="ml-[10px]">Top</Fit>
      </div>
    </div>
  );
}

function TaskCell({ dot, children }: { dot?: boolean; children: React.ReactNode }) {
  return (
    <div className="flex h-[95px] w-[88.500px] shrink-0 flex-col items-center pt-[22px]">
      <svg width="60" height="52" viewBox="0 0 60 52" className="overflow-visible">{children}</svg>
      {dot && <div className="mt-[5px] h-[6px] w-[12px] rounded-full bg-[#9b9b9b]" />}
    </div>
  );
}

function Taskbar() {
  return (
    <div className="absolute top-[1819px] left-0 flex h-[95px] w-[3056px] border-t-2 border-[#3d4040] bg-[linear-gradient(90deg,#1f2422_0%,#1f2423_42%,#2d2019_48%,#2b201b_54%,#1e2427_62%,#1e2427_100%)] font-['Open_Sans',sans-serif] text-white">
      <div className="flex w-[702px] shrink-0 pl-[28px]">
        <svg width="56" height="60" viewBox="0 0 56 60" className="mt-[10px]">
          <ellipse cx="20" cy="35" rx="20" ry="20" fill="url(#sung)" />
          <path d="M18 48Q14 40 22 39Q25 30 33 34Q44 34 43 46Q42 48 40 48Z" fill="#b9cdf8" />
          <circle cx="34" cy="16" r="15.500" fill="#c42b1c" />
          <text x="34" y="23.500" textAnchor="middle" fontSize="20" fill="#fff" fontFamily="Open Sans">2</text>
        </svg>
        <div className="mt-[13px] ml-[3px] flex flex-col items-start text-[23px] leading-[32px]">
          <Fit w={46}>69°F</Fit>
          <Fit w={142} className="text-[#cfcfcf]">Mostly sunny</Fit>
        </div>
      </div>
      <svg width="46" height="46" viewBox="0 0 46 46" className="mt-[24px] shrink-0" fill="url(#wing)">
        <rect width="22" height="22" rx="1.500" /><rect x="24" width="22" height="22" rx="1.500" />
        <rect y="24" width="22" height="22" rx="1.500" /><rect x="24" y="24" width="22" height="22" rx="1.500" />
      </svg>
      <div className="mt-[16px] ml-[29px] flex h-[60px] w-[435px] shrink-0 items-center rounded-full bg-[#f3f3f3] pl-[20px]">
        <svg width="32" height="32" viewBox="0 0 32 32" fill="none" stroke="#222" strokeWidth="3"><circle cx="14" cy="13" r="11" /><path d="M21 21L30 30" /></svg>
        <Fit w={82} className="ml-[20px] text-[25px] text-[#606060]">Search</Fit>
        <svg width="96" height="54" viewBox="0 0 96 54" className="ml-[179px]">
          <path d="M38 51Q38 44 50 40Q52 28 64 30Q66 17 75 20Q84 20 84 32Q94 38 92 50Q88 54 78 52H40Z" fill="#6fa84a" />
          <circle cx="75" cy="26" r="6" fill="#8fbf5c" /><circle cx="66" cy="35" r="6" fill="#7db553" /><circle cx="82" cy="37" r="6" fill="#5fa050" />
          <path d="M60 50Q58 42 68 40Q74 46 84 42Q92 44 90 52Z" fill="#3f9a5c" opacity=".7" />
          <path d="M26 20Q36 6 52 1Q56 14 42 34L28 30Z" fill="#3cc46c" />
          <path d="M52 1Q40 6 30 18L36 22Q48 14 52 1Z" fill="#3fd6cf" />
          <path d="M46 12L34 26M48 18L38 29" stroke="#237a3c" strokeWidth="1.200" />
          <path d="M30 26Q12 24 1 40Q12 54 34 38Z" fill="#2f9a5e" />
          <path d="M1 40Q10 28 30 26L34 32Q14 34 1 40Z" fill="#3fd6e0" />
          <path d="M8 44L28 34M16 46L30 36" stroke="#1d6a38" strokeWidth="1.200" />
          <path d="M20 14Q28 8 34 16Q42 30 46 38L60 52L42 42Q30 34 24 24Z" fill="#9ac93c" />
          <path d="M44 36L62 53M42 38L54 50" stroke="#a88a2e" strokeWidth="1.500" />
          <path d="M17 15Q22 12 22 22Q17 22 17 15Z" fill="#a8325e" />
        </svg>
      </div>
      <div className="ml-[6px] flex shrink-0">
        <TaskCell>
          <rect x="20" y="4" width="35" height="32" rx="2" fill="#ededed" />
          <rect x="7" y="16" width="36" height="32" rx="2" fill="#7a7a7a" opacity=".8" />
        </TaskCell>
        <TaskCell dot>
          <path d="M6 8Q6 6 8 6H22L26 11V22H6Z" fill="#d99a0c" />
          <rect x="6" y="11" width="48" height="37" rx="2" fill="url(#expl)" />
          <path d="M14 48V40Q14 34 20 34H40Q46 34 46 40V48Z" fill="#0f6cbd" />
          <path d="M20 41H40" stroke="#0a3f7a" strokeWidth="2" />
        </TaskCell>
        <TaskCell>
          <path d="M7 9H53V44Q53 49 47 49H13Q7 49 7 44Z" fill="#f2f2f2" />
          <path d="M18 12V5Q18 3 20 3H39Q41 3 41 5V12" fill="none" stroke="#1a9be6" strokeWidth="4" />
          <path d="M20 19h9v9h-9z" fill="#f25022" /><path d="M31 19h9v9h-9z" fill="#7fba00" />
          <path d="M20 30h9v9h-9z" fill="#00a4ef" /><path d="M31 30h9v9h-9z" fill="#ffb900" />
        </TaskCell>
        <TaskCell>
          <circle cx="30" cy="26" r="24" fill="#0f6fc6" />
          <path d="M6 24C8 -6 52 -6 54 24C54 34 40 36 35 31C38 26 36 16 27 17C16 18 10 26 6 24Z" fill="url(#edgeg)" />
          <path d="M24 24C20 36 32 46 50 39C42 52 24 54 16 44C12 34 16 26 24 24Z" fill="#0c4f9e" />
          <path d="M55 25V37L48 38C38 42 28 36 30 22C36 26 36 30 33 31C40 36 52 33 55 25Z" fill="#231d1b" />
        </TaskCell>
        <TaskCell>
          <circle cx="30" cy="26" r="23" fill="#0096d6" stroke="#fff" strokeWidth="2.500" />
          <path d="M20 18Q20 9 30 9Q40 9 40 18Q40 23 34 26Q30 28 30 34" fill="none" stroke="#fff" strokeWidth="6" />
          <circle cx="30" cy="40" r="4" fill="#fff" />
          <circle cx="48" cy="8" r="16" fill="#ffc20e" />
        </TaskCell>
        <TaskCell>
          <rect x="5" y="2" width="48" height="48" rx="3" fill="#0096d6" />
          <text x="8" y="32" fontSize="16" fill="#fff" fontFamily="Open Sans" textLength="20" lengthAdjust="spacingAndGlyphs">my</text>
          <text x="28" y="32" fontSize="20" fontStyle="italic" fontWeight="bold" fill="#fff" fontFamily="Open Sans" textLength="21" lengthAdjust="spacingAndGlyphs">hp</text>
        </TaskCell>
        <TaskCell>
          <g transform="translate(-1 0)">
            <path d="M30 3H50V21H30Z" fill="#cfcfcf" stroke="#333" /><path d="M33 6H47V18H33Z" fill="#0000e0" />
            <path d="M28 22H50L54 18V22L50 25H28Z" fill="#cfcfcf" />
            <path d="M10 27H30V42H10Z" fill="#cfcfcf" stroke="#333" /><path d="M13 30H27V40H13Z" fill="#0000e0" />
            <path d="M6 44H30L34 41V46L30 49H6Z" fill="#cfcfcf" />
            <path d="M42 10L24 23H31L18 35L38 22H31Z" fill="#ffee00" stroke="#222" strokeWidth=".7" />
          </g>
        </TaskCell>
        <TaskCell dot>
          <circle cx="30" cy="26" r="24" fill="#fbbc05" />
          <path d="M30 26L9.200 14A24 24 0 0 1 50.800 14Z" fill="#ea4335" />
          <path d="M30 26L9.200 14A24 24 0 0 0 30 50L40 32Z" fill="#34a853" />
          <circle cx="30" cy="26" r="12" fill="#fff" /><circle cx="30" cy="26" r="9.500" fill="#3b78e7" />
          <circle cx="47" cy="8" r="15.500" fill="#6b5a3f" />
          <path d="M36 20Q32 -6 47 -7Q62 -6 59 18Q54 24 47 24Q40 24 36 20Z" fill="#201814" />
          <ellipse cx="47" cy="7" rx="6.500" ry="9" fill="#a3705a" />
          <path d="M44 12Q47 14 50 12" stroke="#fff" strokeWidth="1.500" fill="none" />
        </TaskCell>
        <TaskCell dot>
          <ellipse cx="30" cy="26" rx="17" ry="17.500" fill="none" stroke="url(#operag)" strokeWidth="9" />
          <ellipse cx="30" cy="26" rx="11" ry="18" fill="#1e2427" />
        </TaskCell>
        <TaskCell dot>
          <rect x="18" y="5" width="36" height="42" rx="2" fill="#1b5cbe" />
          <rect x="18" y="5" width="36" height="11" fill="#41a5ee" /><rect x="18" y="16" width="36" height="10" fill="#2b7cd3" /><rect x="18" y="36" width="36" height="11" fill="#103f91" />
          <rect x="6" y="14" width="25" height="24" rx="2" fill="#1650a8" />
          <text x="18.500" y="32" textAnchor="middle" fontSize="16" fontWeight="bold" fill="#fff" fontFamily="Open Sans">W</text>
        </TaskCell>
        <TaskCell dot>
          <path d="M25 4H35L37 11L44 8L50 15L46 21L54 23V30L46 32L50 38L44 45L37 41L35 49H25L23 41L16 45L10 38L14 32L6 30V23L14 21L10 15L16 8L23 11Z" fill="#75808a" />
          <circle cx="30" cy="26" r="13" fill="#e6eaed" /><circle cx="30" cy="26" r="9" fill="#0f5ea8" />
        </TaskCell>
      </div>
      <div className="mt-[7px] ml-[85px] flex h-[80px] w-[80px] shrink-0 flex-col items-center rounded-[8px] border border-[#42474a] bg-[#303639] pt-[14px]">
        <PTIcon className="h-[48px] w-[46px]" />
        <div className="mt-[9px] h-[6px] w-[32px] rounded-full bg-[#4cc2ff]" />
      </div>
      <div className="mr-[38px] ml-auto flex h-[92px] items-center">
        <svg width="22" height="14" viewBox="0 0 22 14" fill="none" stroke="#fff" strokeWidth="2.500"><path d="M1 13L11 2L21 13" /></svg>
        <svg width="34" height="28" viewBox="0 0 34 28" className="ml-[37px]">
          <path d="M8 24Q0 23 1 16Q3 11 9 11Q12 2 20 4Q26 6 26 11Q33 12 33 18Q32 24 27 24Z" fill="#7c8083" />
          <path d="M3 2L31 27" stroke="#e6e6e6" strokeWidth="2.200" />
        </svg>
        <svg width="36" height="34" viewBox="0 0 36 34" className="ml-[31px]" fill="none" stroke="#fff" strokeWidth="2.300">
          <path d="M3 14Q8 2 20 3Q26 4 31 10M31 1V11H21M4 32V23H13M5 24Q9 30 15 31" />
          <circle cx="25" cy="25" r="8.500" fill="#ff9b0f" stroke="none" />
        </svg>
        <svg width="34" height="26" viewBox="0 0 34 26" className="ml-[30px]" fill="none" stroke="#fff" strokeWidth="2.300">
          <path d="M1 9Q17 -6 33 9M6 14Q17 4 28 14M11 19Q17 13 23 19" /><circle cx="17" cy="23" r="2.500" fill="#fff" stroke="none" />
        </svg>
        <svg width="32" height="28" viewBox="0 0 32 28" className="ml-[15px]" fill="none" stroke="#fff" strokeWidth="2.200">
          <path d="M2 10H7L14 3V25L7 18H2ZM18 9Q21 14 18 19M22 6Q27 14 22 22" /><path d="M26 3Q33 14 26 25" stroke="#6d7274" />
        </svg>
        <svg width="34" height="28" viewBox="0 0 34 28" className="ml-[16px]">
          <rect x="3" y="6" width="26" height="20" rx="4" fill="none" stroke="#fff" strokeWidth="2.200" /><rect x="8" y="10" width="18" height="12" rx="1" fill="#fff" />
          <path d="M30 12h3v8h-3z" fill="#fff" /><path d="M8 0L1 11H5L3 18L12 7H7Z" fill="#fff" stroke="#1e2427" />
        </svg>
        <div className="ml-[19px] flex w-[136px] flex-col items-end text-[23px] leading-[32px]">
          <Fit w={57}>10:36</Fit>
          <Fit w={123}>16/05/2025</Fit>
        </div>
        <svg width="30" height="32" viewBox="0 0 30 32" className="ml-[16px]" fill="#fff">
          <path d="M2 24L5 19V11Q5 2 14 2Q21 3 23 10V19L27 24ZM10 26H18Q17 31 14 31Q11 31 10 26Z" />
          <path d="M9 10H17L10 18H18" stroke="#1e2427" strokeWidth="2.200" fill="none" /><path d="M20 1H28L21 9H29" stroke="#fff" strokeWidth="2.200" fill="none" />
        </svg>
      </div>
    </div>
  );
}

export default function App() {
  return (
    <div className="relative h-[1914px] w-[3056px] overflow-hidden bg-[#dedede] font-['Liberation_Sans',Arial,sans-serif]">
      <Defs />
      <div className="absolute top-0 left-0 h-[400px] w-[3056px] bg-[#cae8bf]" />
      <div className="absolute top-0 left-0 h-[40px] w-[1584px] rounded-tr-[16px] bg-[#28549a]" />
      <div className="absolute top-[80px] right-0 h-[1740px] w-[60px] rounded-tr-[14px] bg-[#e6e6e6]" />
      <svg className="absolute top-[24px] left-[2908px]" width="116" height="14" viewBox="0 0 116 14" fill="none" stroke="#5c6b58" strokeWidth="1.800">
        <path d="M4 5Q6 1 12 1Q20 1 21 12M2 12Q3 6 9 6Q15 6 16 12M94 1L103 11L114 1" />
      </svg>
      <div className="absolute top-[1700px] left-[1500px] h-[94px] w-[688px] rounded-br-[14px] border-r border-b-2 border-[#a5a5a5] bg-[#d8d8d8]" />
      <div className="absolute top-[1700px] left-0 h-[110px] w-[1582px] rounded-br-[14px] rounded-bl-[14px] border-b-[3px] border-[#777] bg-[#c4c4c4]" />
      <svg className="absolute top-[1797px] left-[3033px]" width="20" height="14" viewBox="0 0 20 14" fill="#808080"><path d="M0 2Q0 0 3 0H17Q20 0 20 2L10 14Z" /></svg>
      <MainWindow />
      <ActivityWindow />
      <PduWindow />
      <WebClientWindow />
      <Taskbar />
    </div>
  );
}
